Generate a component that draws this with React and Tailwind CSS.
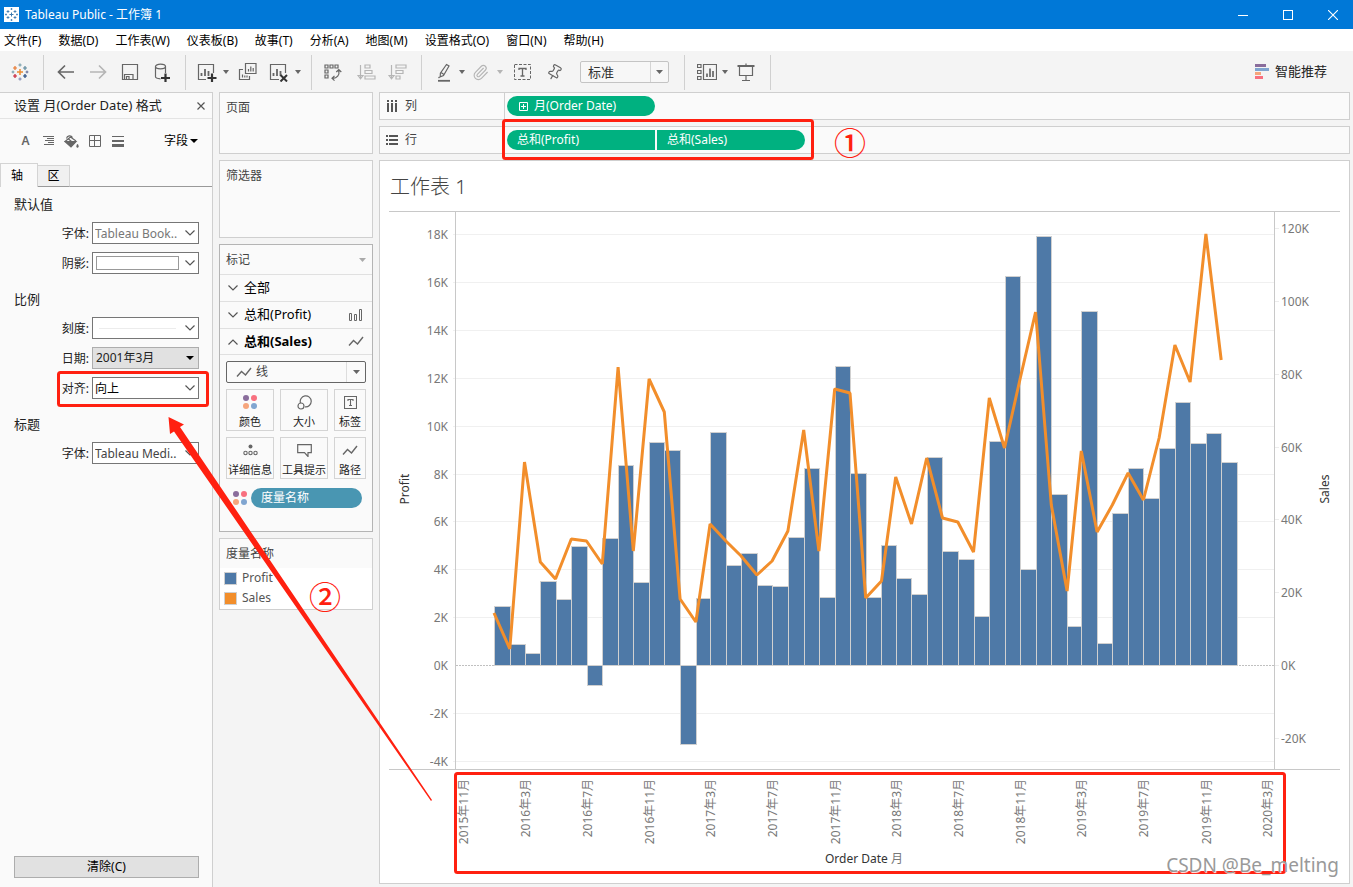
import React from "react";
import { Paperclip, Pin } from "lucide-react";

const UI_FONT = "font-['Noto_Sans','Noto_Sans_CJK_SC',sans-serif]";

/* ---------- chart data: heights above the zero line ---------- */

const ZERO = 665;
const PROFIT = [
  59, 21, 12, 84, 66, 119, -20, 127, 200, 83, 223, 215,
  -79, 67, 233, 100, 112, 80, 79, 128, 197, 68, 299, 192,
  68, 120, 87, 71, 208, 114, 106, 49, 224, 389, 96, 429,
  171, 39, 354, 22, 152, 197, 167, 217, 263, 222, 232, 203,
];
const SALES = [
  52, 16, 203, 103, 86, 126, 124, 101, 298, 114, 286, 253,
  66, 43, 141, 124, 109, 90, 104, 134, 235, 114, 276, 272,
  67, 84, 188, 141, 207, 147, 143, 113, 267, 217, 287, 353,
  160, 74, 214, 133, 160, 192, 165, 227, 320, 283, 431, 305,
];
const PROFIT_TICKS = [18, 16, 14, 12, 10, 8, 6, 4, 2, 0, -2, -4];
const SALES_TICKS = [120, 100, 80, 60, 40, 20, 0, -20];
const DAY = 86400000;
const START = Date.UTC(2016, 0, 1);
const xOf = (year, month) => 494 + ((Date.UTC(year, month, 1) - START) / DAY) * 0.5085;
const monthX = (i) => xOf(2016, i);
const DATE_TICKS = Array.from({ length: 14 }, (_, i) => {
  const d = new Date(Date.UTC(2015, 10 + i * 4, 1));
  return {
    x: Math.round(xOf(2015, 10 + i * 4)),
    label: d.getUTCFullYear() + "年" + (d.getUTCMonth() + 1) + "月",
  };
});

/* ---------- small drawings ---------- */

function Caret({ className = "text-[#666]" }) {
  return (
    <svg width="6" height="4" viewBox="0 0 6 4" className={"shrink-0 " + className} aria-hidden="true">
      <path d="M0 0h6L3 4z" fill="currentColor" />
    </svg>
  );
}

function Chevron({ up = false }) {
  return (
    <svg width="10" height="6" viewBox="0 0 10 6" className="shrink-0" fill="none" stroke="#555" strokeWidth="1.2" aria-hidden="true">
      <path d={up ? "M.5 5.5 5 1l4.5 4.5" : "M.5.5 5 5 9.5.5"} />
    </svg>
  );
}

function Icon({ children, color = "#666", size = 20 }) {
  return (
    <svg width={size} height={size} viewBox="0 0 20 20" fill="none" stroke={color} strokeWidth="1.2" aria-hidden="true">
      {children}
    </svg>
  );
}

function Tool({ label, children, className = "" }) {
  return (
    <button type="button" aria-label={label} className={"flex h-8 w-[30px] shrink-0 items-center justify-center " + className}>
      {children}
    </button>
  );
}

const Sep = () => <div className="h-[35px] w-px shrink-0 bg-[#d0d0d0]" />;

function Plus({ x, y, r, color, w = 1.4 }) {
  return <path d={`M${x - r} ${y}h${2 * r}M${x} ${y - r}v${2 * r}`} stroke={color} strokeWidth={w} />;
}

function TableauMark() {
  return (
    <svg width="18" height="18" viewBox="0 0 18 18" aria-hidden="true">
      <Plus x={9} y={9} r={3} color="#eb8a2f" w={1.5} />
      <Plus x={4} y={5} r={2} color="#e8762c" w={1.2} />
      <Plus x={14} y={5} r={2} color="#5b879b" w={1.2} />
      <Plus x={4} y={13} r={2} color="#c72035" w={1.2} />
      <Plus x={14} y={13} r={2} color="#1f457e" w={1.2} />
      <Plus x={9} y={2} r={1.6} color="#7199a6" w={1} />
      <Plus x={9} y={16} r={1.6} color="#7b82b0" w={1} />
      <Plus x={2} y={9} r={1.4} color="#7199a6" w={1} />
      <Plus x={16} y={9} r={1.4} color="#5c6692" w={1} />
    </svg>
  );
}

function ColorDots() {
  return (
    <svg width="14" height="14" viewBox="0 0 14 14" aria-hidden="true">
      <circle cx="3" cy="3" r="3" fill="#8a6d9c" />
      <circle cx="11" cy="3" r="3" fill="#f8707f" />
      <circle cx="3" cy="11" r="3" fill="#f6a57c" />
      <circle cx="11" cy="11" r="3" fill="#80a5d0" />
    </svg>
  );
}

function LineMark() {
  return (
    <svg width="16" height="11" viewBox="0 0 16 11" fill="none" stroke="#666" strokeWidth="1.4" aria-hidden="true">
      <path d="m1 9.500 4.500-5 4 3.500L15 1" />
    </svg>
  );
}

/* ---------- top bars ---------- */

function TitleBar() {
  return (
    <header className="flex h-[29px] items-center bg-[#0078d7] pl-1 text-white">
      <svg width="15" height="15" viewBox="0 0 15 15" aria-hidden="true">
        <rect width="15" height="15" fill="#fff" />
        <Plus x={7.5} y={7.5} r={2} color="#3b7bb0" w={1} />
        <Plus x={4} y={4.5} r={1.4} color="#3b7bb0" w={0.9} />
        <Plus x={11} y={4.5} r={1.4} color="#3b7bb0" w={0.9} />
        <Plus x={4} y={10.5} r={1.4} color="#3b7bb0" w={0.9} />
        <Plus x={11} y={10.5} r={1.4} color="#3b7bb0" w={0.9} />
        <Plus x={7.5} y={2} r={1} color="#3b7bb0" w={0.8} />
        <Plus x={7.5} y={13} r={1} color="#3b7bb0" w={0.8} />
        <Plus x={2} y={7.5} r={1} color="#3b7bb0" w={0.8} />
        <Plus x={13} y={7.5} r={1} color="#3b7bb0" w={0.8} />
      </svg>
      <h1 className="ml-1.5 text-xs">Tableau Public - 工作簿 1</h1>
      <div className="ml-auto flex gap-[5px]">
        <button type="button" aria-label="最小化" className="flex h-[27px] w-10 items-center justify-center">
          <svg width="10" height="10" viewBox="0 0 10 10" stroke="#fff"><path d="M0 5.500h10" /></svg>
        </button>
        <button type="button" aria-label="最大化" className="flex h-[27px] w-10 items-center justify-center">
          <svg width="10" height="10" viewBox="0 0 10 10" fill="none" stroke="#fff"><rect x=".5" y=".5" width="9" height="9" /></svg>
        </button>
        <button type="button" aria-label="关闭" className="flex h-[27px] w-10 items-center justify-center">
          <svg width="10" height="10" viewBox="0 0 10 10" stroke="#fff" strokeWidth="1.100"><path d="m0 0 10 10M10 0 0 10" /></svg>
        </button>
      </div>
    </header>
  );
}

const MENUS = ["文件(F)", "数据(D)", "工作表(W)", "仪表板(B)", "故事(T)", "分析(A)", "地图(M)", "设置格式(O)", "窗口(N)", "帮助(H)"];

function MenuBar() {
  return (
    <nav className="flex h-[22px] items-center gap-[17px] bg-white pl-1 pt-px text-xs text-black">
      {MENUS.map((m) => (
        <button type="button" key={m} className="whitespace-nowrap">{m}</button>
      ))}
    </nav>
  );
}

function MiniBars() {
  return <path d="M4.500 14v-3M8 14V7M11.500 14V9" strokeWidth="1.800" />;
}

function Toolbar() {
  return (
    <div className="flex h-[41px] items-center bg-[#f4f4f4] pt-px">
      <div className="flex w-[43px] shrink-0 items-center pl-[11px]"><TableauMark /></div>
      <Sep />
      <div className="flex gap-0.5 pl-[7px] pr-2">
        <Tool label="撤消">
          <Icon><path d="M2.500 10H18M9 3.500 2.500 10 9 16.500" strokeWidth="1.700" /></Icon>
        </Tool>
        <Tool label="重做">
          <Icon color="#b5b5b5"><path d="M17.500 10H2M11 3.500l6.500 6.500-6.500 6.500" strokeWidth="1.700" /></Icon>
        </Tool>
        <Tool label="保存">
          <Icon><path d="M2.500 2.500h15v15h-15zM4.500 17.500v-5h8.500v5M6.500 17v-2.500H9V17" /></Icon>
        </Tool>
        <Tool label="新建数据源">
          <Icon>
            <path d="M3.500 4.500v10.300c0 1 2 1.900 5 2M13.500 4.500V11" />
            <ellipse cx="8.500" cy="4.500" rx="5" ry="2.300" />
            <path d="M9 16h9M13.500 11.500v9" stroke="#333" strokeWidth="2.200" />
          </Icon>
        </Tool>
      </div>
      <Sep />
      <div className="flex items-center pl-[6px] pr-[10px]">
        <Tool label="新建工作表">
          <Icon>
            <path d="M9 17.500H1.500v-15h15V11" />
            <MiniBars />
            <path d="M10.500 16h9M15 11.500v9" stroke="#333" strokeWidth="2.200" />
          </Icon>
        </Tool>
        <Caret className="ml-px text-[#666]" />
        <Tool label="复制工作表" className="ml-1">
          <Icon>
            <path d="M5 7.500H1.500v10h10V14M7.500 1.500h10.500v10H7.500zM10.500 9.500V7M12.800 9.500v-5M15.200 9.500V6M4.500 15.500v-3M6.800 15.500v-2M9 15.500v-2" />
          </Icon>
        </Tool>
        <Tool label="清除工作表" className="ml-px">
          <Icon>
            <path d="M10 17.500H1.500v-15h15V11" />
            <MiniBars />
            <path d="m11.500 13 6.500 6.500m0-6.500-6.500 6.500" stroke="#333" strokeWidth="2" />
          </Icon>
        </Tool>
        <Caret className="ml-px text-[#666]" />
      </div>
      <Sep />
      <div className="flex pl-[6px] pr-2">
        <Tool label="交换行和列">
          <Icon>
            <path d="M2 3h3v3H2zM7 3h3v3H7zM12 3h3v3h-3zM2 8h3v3H2zM2 13h3v3H2z" />
            <path d="M15.800 8.500c1 4.500-1.800 8-6.300 7.800M13.300 10l2.500-2.500L18.300 10M11.500 13.800 9 16.300l2.500 2.300" />
          </Icon>
        </Tool>
        <Tool label="升序排序" className="ml-1">
          <Icon color="#b5b5b5">
            <path d="M3.500 3v13M1 13.500l2.500 3.300L6 13.500zM8 3h5v3H8zM8 8.500h7v3H8zM8 14h10v3H8z" />
          </Icon>
        </Tool>
        <Tool label="降序排序" className="ml-px">
          <Icon color="#b5b5b5">
            <path d="M3.500 3v13M1 13.500l2.500 3.300L6 13.500zM8 3h10v3H8zM8 8.500h7v3H8zM8 14h4v3H8z" />
          </Icon>
        </Tool>
      </div>
      <Sep />
      <div className="flex items-center pl-[7px] pr-[15px]">
        <Tool label="突出显示">
          <Icon>
            <path d="M12.500 2.500 15 4l-5.500 9.500-3.300 1.300.200-3.600zM7 10.500l3 2M5.500 15 4.500 16" />
            <path d="M4 18.800h12" strokeWidth="1.800" />
          </Icon>
        </Tool>
        <Caret />
        <Tool label="组成员">
          <Paperclip className="size-[17px] text-[#b5b5b5]" strokeWidth={1.6} />
        </Tool>
        <Caret className="ml-0.5 text-[#b5b5b5]" />
        <Tool label="显示标记标签" className="ml-[5px]">
          <Icon>
            <rect x="1.500" y="2.500" width="16" height="15" strokeWidth="1" strokeDasharray="3 1.500" />
            <path d="M6 8V6.500h7V8M9.500 6.500v7.500M7.500 14h4" strokeWidth="1.300" />
          </Icon>
        </Tool>
        <Tool label="固定轴" className="ml-px">
          <Pin className="size-[17px] rotate-[30deg] text-[#666]" strokeWidth={1.7} />
        </Tool>
        <div className="relative ml-[11px] h-[22px] w-[89px]">
          <select aria-label="适合" className="block size-full appearance-none rounded-xs border border-[#c4c4c4] bg-[#f7f7f7] pl-[7px] text-[13px] leading-5 text-[#333]">
            <option>标准</option>
          </select>
          <div className="pointer-events-none absolute inset-y-px right-px flex w-[18px] items-center justify-center border-l border-[#d4d4d4]">
            <svg width="7" height="4" viewBox="0 0 7 4"><path d="M0 0h7L3.500 4z" fill="#666" /></svg>
          </div>
        </div>
      </div>
      <Sep />
      <div className="flex items-center pl-[7px] pr-[9px]">
        <Tool label="显示/隐藏卡">
          <Icon>
            <path d="M.5 2.500h3.500v3H.5zM.5 8.500h3.500v3H.5zM.5 14.500h3.500v3H.5zM6.500 2.500h13v15h-13z" />
            <path d="M10 15v-3.500M13 15V6.500M16 15V9" strokeWidth="1.700" />
          </Icon>
        </Tool>
        <Caret />
        <Tool label="演示模式" className="ml-[3px]">
          <Icon>
            <path d="M1.500 4h17" strokeWidth="2" />
            <path d="M3.500 4.500v9h13v-9M10 1.500V4M10 13.500v5M6 18.500h8" />
          </Icon>
        </Tool>
      </div>
      <Sep />
      <button type="button" className="ml-auto mr-[26px] flex items-center gap-1.5 whitespace-nowrap text-[13px] text-[#222]">
        <svg width="14" height="16" viewBox="0 0 14 16" aria-hidden="true">
          <path d="M0 0h11v3H0z" fill="#8a6d9c" />
          <path d="M0 4h14v3H0z" fill="#80a5d0" />
          <path d="M0 8h6v3H0z" fill="#f6a57c" />
          <path d="M0 12h8v3H0z" fill="#f8707f" />
        </svg>
        智能推荐
      </button>
    </div>
  );
}

/* ---------- format panel ---------- */

function Field({ id, label, children }) {
  return (
    <div className="flex h-[22px] items-center justify-end gap-[3px]">
      <label htmlFor={id} className="pt-px text-xs text-[#222]">{label}</label>
      <div className="relative h-full w-[107px]">{children}</div>
    </div>
  );
}

function PickSelect({ id, value, className = "text-black" }) {
  return (
    <>
      <select id={id} className={"block size-full appearance-none border border-[#767676] bg-white pl-0.5 pt-px text-xs " + className}>
        <option>{value}</option>
      </select>
      <span className="pointer-events-none absolute inset-y-0 right-1 flex items-center"><Chevron /></span>
    </>
  );
}

function Heading({ children }) {
  return <h3 className="mb-2 text-[13px] leading-5 text-[#222]">{children}</h3>;
}

function FormatPanel() {
  return (
    <aside className="flex w-[213px] shrink-0 flex-col border-r border-t border-[#cfcfcf] bg-[#fafafa]">
      <div className="flex h-[26px] items-center border-b border-[#e4e4e4] pl-3.5 pr-[3px]">
        <h2 className="whitespace-nowrap text-[13px] text-[#222]">设置 月(Order Date) 格式</h2>
        <button type="button" aria-label="关闭" className="ml-auto flex size-4 items-center justify-center">
          <svg width="8" height="8" viewBox="0 0 8 8" stroke="#555" strokeWidth="1.200"><path d="m.5.5 7 7m0-7-7 7" /></svg>
        </button>
      </div>
      <div className="flex h-11 items-center pl-3.5 pr-3.5">
        <button type="button" aria-label="字体" className="w-[23px] text-xs font-semibold text-[#666]">A</button>
        <button type="button" aria-label="对齐" className="flex w-[23px] justify-center">
          <svg width="11" height="10" viewBox="0 0 11 10" stroke="#666"><path d="M0 .5h11M4 2.500h7M2 4.500h9M5 6.500h6M1 8.500h10" /></svg>
        </button>
        <button type="button" aria-label="阴影格式" className="flex w-[23px] justify-center">
          <svg width="15" height="13" viewBox="0 0 15 13" fill="none" stroke="#666" strokeWidth="1.200">
            <path d="M1 6.500 6.500 2l5.500 4M2.500 3.500C3 .5 7 0 8.500 2.500M4.500 4l3 2.500" />
            <path d="M1 6.500h11L7 11.800z" fill="#666" />
            <path d="M13.500 9c-1.500 2.500-1 3.500 0 3.500s1.500-1 0-3.500z" fill="#666" strokeWidth=".5" />
          </svg>
        </button>
        <button type="button" aria-label="边界格式" className="flex w-[23px] justify-center">
          <svg width="12" height="12" viewBox="0 0 12 12" fill="none" stroke="#666"><path d="M.5.500h11v11H.5zM5.500.5v11M.5 5.500h11" /></svg>
        </button>
        <button type="button" aria-label="线格式" className="flex w-[23px] justify-center">
          <svg width="12" height="11" viewBox="0 0 12 11" fill="#666"><path d="M0 0h12v1H0zM0 4h12v2H0zM0 8h12v3H0z" /></svg>
        </button>
        <button type="button" className="ml-auto flex items-center gap-0.5 whitespace-nowrap text-xs text-black">
          字段
          <svg width="8" height="4" viewBox="0 0 8 4"><path d="M0 0h8L4 4z" /></svg>
        </button>
      </div>
      <div className="flex h-6 items-end" role="tablist">
        <button type="button" role="tab" aria-selected="true" className="h-6 w-[38px] border-l border-r border-t border-[#d4d4d4] bg-[#fafafa] pr-1 text-xs text-black">轴</button>
        <button type="button" role="tab" aria-selected="false" className="h-[22px] w-8 border-b border-r border-t border-b-[#999] border-r-[#d4d4d4] border-t-[#d4d4d4] bg-[#f0f0f0] text-xs text-black">区</button>
        <div className="h-px flex-1 bg-[#999]" />
      </div>
      <div className="flex flex-1 flex-col gap-[15px] pb-[9px] pl-3.5 pr-[13px] pt-[7px]">
        <section>
          <Heading>默认值</Heading>
          <div className="flex flex-col gap-2">
            <Field id="f-font" label="字体:"><PickSelect id="f-font" value="Tableau Book.." className="text-[#777]" /></Field>
            <Field id="f-shade" label="阴影:">
              <button type="button" id="f-shade" className="flex size-full items-center justify-between border border-[#767676] bg-white px-[3px]">
                <span className="h-3.5 w-[83px] border border-[#999]" />
                <Chevron />
              </button>
            </Field>
          </div>
        </section>
        <section>
          <Heading>比例</Heading>
          <div className="flex flex-col gap-2">
            <Field id="f-tick" label="刻度:">
              <button type="button" id="f-tick" className="flex size-full items-center justify-between border border-[#767676] bg-white pl-1.5 pr-[3px]">
                <span className="h-px w-[77px] bg-[#ececec]" />
                <Chevron />
              </button>
            </Field>
            <Field id="f-date" label="日期:">
              <button type="button" id="f-date" className="flex size-full items-center justify-between border border-[#adadad] bg-[#e1e1e1] pl-[3px] pr-1 text-xs text-[#222]">
                2001年3月
                <svg width="8" height="4" viewBox="0 0 8 4"><path d="M0 0h8L4 4z" /></svg>
              </button>
            </Field>
            <Field id="f-align" label="对齐:"><PickSelect id="f-align" value="向上" /></Field>
          </div>
        </section>
        <section>
          <Heading>标题</Heading>
          <Field id="f-title" label="字体:"><PickSelect id="f-title" value="Tableau Medi.." className="text-[#444]" /></Field>
        </section>
        <button type="button" className="mt-auto h-[22px] border border-[#adadad] bg-[#e1e1e1] text-xs text-black">清除(C)</button>
      </div>
    </aside>
  );
}

/* ---------- cards ---------- */

function MarkButton({ label, children }) {
  return (
    <button type="button" className="flex h-[42px] flex-col items-center justify-between whitespace-nowrap border border-[#d4d4d4] bg-[#fafafa] pt-1 text-[11px] leading-4 text-[#222]">
      <span className="flex h-4 items-center">{children}</span>
      {label}
    </button>
  );
}

function MarksCard() {
  return (
    <section className="h-[288px] border border-[#b4b4b4] bg-[#fafafa]">
      <div className="flex h-[30px] items-center justify-between border-b border-[#e0e0e0] px-1.5">
        <h2 className="text-xs text-[#444]">标记</h2>
        <svg width="7" height="4" viewBox="0 0 7 4"><path d="M0 0h7L3.500 4z" fill="#aaa" /></svg>
      </div>
      <button type="button" className="flex h-[27px] w-full items-center gap-1.5 border-b border-[#e0e0e0] px-2 text-[13px] text-black"><Chevron />全部</button>
      <button type="button" className="flex h-[27px] w-full items-center gap-1.5 border-b border-[#e0e0e0] pl-2 pr-2.5 text-[13px] text-black">
        <Chevron />总和(Profit)
        <svg width="13" height="12" viewBox="0 0 13 12" fill="none" stroke="#666" className="ml-auto"><path d="M.5 4.500h2v7h-2zM5.500 5.500h2v6h-2zM10.500.5h2v11h-2z" /></svg>
      </button>
      <button type="button" className="flex h-[26px] w-full items-center gap-1.5 border-b border-[#e0e0e0] px-2 text-[13px] font-bold text-black">
        <Chevron up />总和(Sales)
        <span className="ml-auto"><LineMark /></span>
      </button>
      <div className="px-1.5 pt-1.5">
        <button type="button" className="flex h-[22px] w-full items-center rounded-xs border border-[#666] bg-[#fafafa] pl-[9px] text-xs text-[#444]">
          <LineMark />
          <span className="ml-1">线</span>
          <span className="ml-auto flex h-full w-[19px] items-center justify-center border-l border-[#ddd]">
            <svg width="7" height="4" viewBox="0 0 7 4"><path d="M0 0h7L3.500 4z" fill="#666" /></svg>
          </span>
        </button>
        <div className="mt-1.5 grid grid-cols-[48px_48px_1fr] gap-1.5">
          <MarkButton label="颜色"><ColorDots /></MarkButton>
          <MarkButton label="大小">
            <svg width="15" height="15" viewBox="0 0 15 15" fill="none" stroke="#666" strokeWidth="1.200"><path d="M3.500 8A5.500 5.500 0 1 1 8 11.800" /><circle cx="4" cy="11" r="3" /></svg>
          </MarkButton>
          <MarkButton label="标签">
            <svg width="13" height="13" viewBox="0 0 13 13" fill="none" stroke="#666" strokeWidth="1.100"><path d="M.5.500h12v12H.5zM4 5V3.500h5V5M6.500 3.500v6M5 9.500h3" /></svg>
          </MarkButton>
          <MarkButton label="详细信息">
            <svg width="15" height="12" viewBox="0 0 15 12" fill="none" stroke="#666" strokeWidth="1.100"><circle cx="7.500" cy="2.500" r="2" fill="#666" stroke="none" /><circle cx="2.500" cy="9" r="1.700" /><circle cx="7.500" cy="9" r="1.700" /><circle cx="12.500" cy="9" r="1.700" /></svg>
          </MarkButton>
          <MarkButton label="工具提示">
            <svg width="15" height="13" viewBox="0 0 15 13" fill="none" stroke="#666" strokeWidth="1.200"><path d="M.7.700h13.600v8h-3.300v3.800L7.500 8.700H.7z" /></svg>
          </MarkButton>
          <MarkButton label="路径"><LineMark /></MarkButton>
        </div>
        <div className="mt-[9px] flex items-center gap-1 pl-[7px] pr-1">
          <ColorDots />
          <button type="button" className="h-5 flex-1 rounded-full bg-[#4996b2] pl-2.5 text-left text-xs text-white">度量名称</button>
        </div>
      </div>
    </section>
  );
}

function Cards() {
  return (
    <div className="flex w-[154px] shrink-0 flex-col gap-1.5">
      <section className="h-[62px] border border-[#cfcfcf] bg-[#fafafa] px-1.5 pt-[7px] text-xs text-[#444]"><h2>页面</h2></section>
      <section className="h-[78px] border border-[#cfcfcf] bg-[#fafafa] px-1.5 pt-[7px] text-xs text-[#444]"><h2>筛选器</h2></section>
      <MarksCard />
      <section className="h-[72px] border border-[#cfcfcf] bg-white text-xs text-[#444]">
        <h2 className="flex h-[29px] items-center bg-[#fafafa] pl-1.5">度量名称</h2>
        <ul className="pl-1 text-[#555]">
          <li className="flex h-5 items-center gap-[5px]"><span className="size-[13px] border border-[#d0d0d0] bg-[#4e79a7]" />Profit</li>
          <li className="flex h-5 items-center gap-[5px]"><span className="size-[13px] border border-[#d0d0d0] bg-[#f28e2b]" />Sales</li>
        </ul>
      </section>
    </div>
  );
}

/* ---------- shelves and sheet ---------- */

function Shelf({ label, icon, children }) {
  return (
    <div className="flex h-[28px] items-center border border-[#cfcfcf] bg-[#fafafa]">
      <div className="flex h-full w-[125px] shrink-0 items-center gap-[7px] border-r border-[#cfcfcf] pl-1.5 text-xs text-[#444]">{icon}{label}</div>
      <div className="flex gap-0.5 pl-0.5 text-xs text-white">{children}</div>
    </div>
  );
}

function Chart() {
  const points = SALES.map((h, i) => `${monthX(i).toFixed(1)},${ZERO - h}`).join(" ");
  return (
    <svg viewBox="380 208 969 675" className="block h-auto w-full" fontSize="12" fill="#787878" role="img" aria-label="工作表 1">
      <g shapeRendering="crispEdges">
        {PROFIT_TICKS.map((t) => {
          const y = Math.round(ZERO - t * 23.92) + 0.5;
          return t === 0 ? (
            <path key={t} d={`M456 ${y}H1274`} stroke="#c0c0c0" strokeDasharray="2 1" />
          ) : (
            <path key={t} d={`M453 ${y}H1274`} stroke="#f0f0f0" />
          );
        })}
        {SALES_TICKS.map((t) => <path key={t} d={`M1275 ${Math.round(ZERO - t * 3.64) + 0.5}h4`} stroke="#ececec" />)}
        {PROFIT.map((h, i) => {
          const x = Math.round(monthX(i));
          const w = Math.round(monthX(i + 1)) - x;
          return (
            <rect key={i} x={x + 0.5} y={(h > 0 ? ZERO - h : ZERO) + 0.5} width={w} height={Math.abs(h)} fill="#4e79a7" stroke="#d0d0d0" />
          );
        })}
        <path d="M389 211.500H1340M455.500 212V769M1274.500 212V769M389 769.500H1340" fill="none" stroke="#c8c8c8" />
      </g>
      <polyline points={points} fill="none" stroke="#f28e2b" strokeWidth="3" strokeLinejoin="bevel" />
      {PROFIT_TICKS.map((t) => (
        <text key={t} x="448" y={ZERO + 5 - t * 23.92} textAnchor="end">{t}K</text>
      ))}
      {SALES_TICKS.map((t) => (
        <text key={t} x="1281" y={ZERO + 5 - t * 3.64}>{t}K</text>
      ))}
      {DATE_TICKS.map(({ x, label }) => (
        <text key={label} transform={`translate(${x + 5} 779) rotate(-90)`} textAnchor="end">{label}</text>
      ))}
      <g fill="#333">
        <text transform="translate(409 489) rotate(-90)" textAnchor="middle">Profit</text>
        <text transform="translate(1329 489) rotate(-90)" textAnchor="middle">Sales</text>
        <text x="864" y="863" textAnchor="middle">Order Date <tspan fill="#787878">月</tspan></text>
      </g>
    </svg>
  );
}

function Annotations() {
  return (
    <svg width="1353" height="887" viewBox="0 0 1353 887" className="pointer-events-none absolute left-0 top-0" fill="none" stroke="#ff2010" strokeWidth="3" aria-hidden="true">
      <rect x="503.500" y="120.500" width="309" height="38" rx="2" />
      <rect x="58.500" y="372.500" width="149" height="33" rx="2" />
      <rect x="455.500" y="773.500" width="829" height="99" rx="2" />
      <path d="M168.500 417 184 424.500l-4 2.500 252 373-1 1L174 431.500l-4 2.500z" fill="#ff2010" stroke="none" />
      <g fill="#ff2010" stroke="none" fontSize="32" fontWeight="500" textAnchor="middle" fontFamily="'Noto Sans CJK SC', sans-serif">
        <text x="850" y="155">①</text>
        <text x="325" y="609">②</text>
      </g>
    </svg>
  );
}

export default function App() {
  return (
    <div className={"relative flex min-h-screen flex-col overflow-hidden bg-[#f4f4f4] " + UI_FONT}>
      <TitleBar />
      <MenuBar />
      <Toolbar />
      <div className="flex flex-1 gap-1.5">
        <FormatPanel />
        <Cards />
        <main className="mb-[3px] mr-[3px] flex min-w-0 flex-1 flex-col gap-1.5">
          <Shelf
            label="列"
            icon={<svg width="12" height="12" viewBox="0 0 12 12" fill="#555"><path d="M1 0h2v2H1zM5 0h2v2H5zM9 0h2v2H9zM1 3h2v9H1zM5 3h2v9H5zM9 3h2v9H9z" /></svg>}
          >
            <button type="button" className="flex h-5 w-[148px] items-center gap-1.5 rounded-full bg-[#00b180] pl-3">
              <svg width="9" height="9" viewBox="0 0 9 9" fill="none" stroke="#fff"><path d="M.5.500h8v8h-8zM4.500 2v5M2 4.500h5" /></svg>
              月(Order Date)
            </button>
          </Shelf>
          <Shelf
            label="行"
            icon={<svg width="12" height="12" viewBox="0 0 12 12" fill="#555"><path d="M0 1h2v2H0zM0 5h2v2H0zM0 9h2v2H0zM3 1h9v2H3zM3 5h9v2H3zM3 9h9v2H3z" /></svg>}
          >
            <button type="button" className="h-5 w-[148px] rounded-l-full bg-[#00b180] pl-2.5 text-left">总和(Profit)</button>
            <button type="button" className="h-5 w-[148px] rounded-r-full bg-[#00b180] pl-2.5 text-left">总和(Sales)</button>
          </Shelf>
          <section className="flex-1 border border-[#cfcfcf] bg-white">
            <h2 className="flex h-[47px] items-center pl-2.5 pt-1 text-xl font-light text-[#444]">工作表 1</h2>
            <Chart />
          </section>
        </main>
      </div>
      <Annotations />
      <p className="pointer-events-none absolute bottom-2 right-3.5 text-[19px] leading-7 text-[#999] [text-shadow:1px_1px_1px_#fff]">CSDN @Be_melting</p>
    </div>
  );
}
